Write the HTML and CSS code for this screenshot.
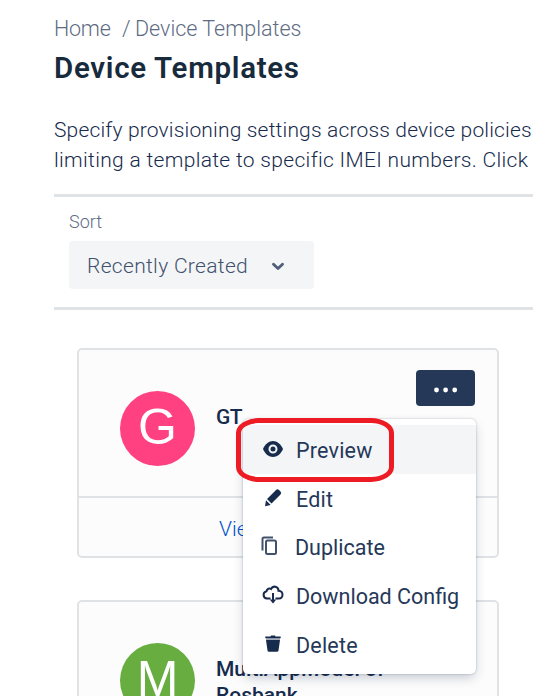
FILE: index.html
```html
<!DOCTYPE html>
<html lang="en">
<head>
<meta charset="utf-8">
<title>Device Templates</title>
<link rel="stylesheet" href="styles.css">
</head>
<body>
<main class="page">
  <nav class="breadcrumb"><span class="home">Home</span><span class="slash">/</span><span class="current">Device Templates</span></nav>
  <h1 class="title">Device Templates</h1>
  <p class="intro"><span class="line1">Specify provisioning settings across device policies</span><br><span class="line2">limiting a template to specific IMEI numbers. Click</span></p>
  <section class="filters">
    <div class="label"><span>Sort</span></div>
    <div class="select"><span class="value">Recently Created</span>
      <svg class="chevron" width="14" height="10" viewBox="0 0 14 10"><path d="M2.500 3.300 7 7.500l4.500-4.200" fill="none" stroke="#505f79" stroke-width="2.900" stroke-linecap="round" stroke-linejoin="round"/></svg>
    </div>
  </section>
  <section class="cards">
    <article class="card">
      <div class="card-body">
        <div class="avatar pink"><span>G</span></div>
        <h2 class="name gt"><span>GT</span></h2>
        <button class="more" aria-label="More"><svg width="24" height="6" viewBox="0 0 24 6" fill="#fff"><circle cx="2.500" cy="3" r="2.400"/><circle cx="11.600" cy="3" r="2.400"/><circle cx="20.700" cy="3" r="2.400"/></svg></button>
        <div class="menu">
          <div class="item active"><svg class="icon" viewBox="0 0 24 24"><path fill-rule="evenodd" d="M2 12C4 7 8 4 12 4S20 7 22 12C20 17 16 20 12 20S4 17 2 12Zm10-4.500a4.500 4.500 0 1 0 0 9 4.500 4.500 0 0 0 0-9Zm0 2a2.500 2.500 0 1 1 0 5 2.500 2.500 0 0 1 0-5Z"/></svg><span class="text preview">Preview</span></div>
          <div class="item"><svg class="icon" viewBox="0 0 24 24"><path d="m6 13 9-9q1.500-1.500 3 0l1.500 1.500q1.500 1.500 0 3l-9 9ZM5 14.300l4.700 4.700L4 20.300Z"/></svg><span class="text edit">Edit</span></div>
          <div class="item"><svg class="icon copy" viewBox="0 0 24 24"><g fill="none" stroke="#42526e" stroke-width="2"><rect x="8" y="6.500" width="10" height="13.500" rx="1.500"/><path d="M4.500 16.500V5q0-1.500 1.500-1.500h9"/></g></svg><span class="text duplicate">Duplicate</span></div>
          <div class="item"><svg class="icon" viewBox="0 0 24 24"><g fill="none" stroke="#172b4d" stroke-width="2"><path d="M9.500 15.500H6a3.700 3.700 0 0 1-.5-7.300C6 5.500 8.500 5 10 6c2-4 7.500-2.500 7.500 1.700 5.500.3 5 7.800.5 7.800h-3.500M12 10v8"/></g><path d="M8.700 16.500h6.600L12 20.500Z"/></svg><span class="text download">Download Config</span></div>
          <div class="item"><svg class="icon" viewBox="0 0 24 24"><path d="M4.300 4.500H9.500L10 3.500h4l.5 1h5.200v1.700H4.300Z"/><path d="M5 6.200h14v1.800H5Z" opacity=".4"/><path d="M5 8h14l-1.500 10.500q-.2 1.300-1.500 1.300H8q-1.300 0-1.500-1.300Z"/></svg><span class="text delete">Delete</span></div>
          <div class="highlight"></div>
        </div>
      </div>
      <div class="card-foot"><span>View</span></div>
    </article>
    <article class="card">
      <div class="card-body">
        <div class="avatar green"><span>M</span></div>
        <h2 class="name multi"><span>MultiAppModel of</span><br><span>Rosbank</span></h2>
      </div>
    </article>
  </section>
</main>
</body>
</html>
```
FILE: styles.css
```css
* { box-sizing: border-box; }
html, body { margin: 0; height: 696px; overflow: hidden; }
body { background: #fff; color: #172b4d; font-family: Roboto, "Liberation Sans", sans-serif; }
.page { padding: 14px 0 0 54px; width: 533px; height: 696px; overflow: hidden; }
.breadcrumb { display: flex; height: 30px; line-height: 30px; font-size: 21.500px; font-weight: 300; color: #5e6c84; white-space: pre; }
.home { width: 68px; letter-spacing: -.2px; }
.slash { width: 13px; }
.title { margin: 6px 0 0; height: 36px; line-height: 36px; font-size: 29.500px; font-weight: 600; letter-spacing: .7px; color: #172b3d; white-space: nowrap; }
.intro { margin: 29px 0 0; font-size: 21px; font-weight: 300; line-height: 30px; height: 79px; white-space: nowrap; }
.line1 { letter-spacing: .17px; }
.line2 { letter-spacing: .32px; }
.filters { height: 116px; border-top: 3px solid #dfe3e6; border-bottom: 3px solid #dfe3e6; padding: 14px 15px 0; }
.label { height: 30px; line-height: 22px; font-size: 18px; font-weight: 300; color: #5e6c84; }
.select { width: 245px; height: 48px; border-radius: 4px; background: #f4f5f7; color: #42526e; display: flex; align-items: center; padding: 1px 0 0 18px; font-size: 21px; font-weight: 300; }
.value { width: 184px; letter-spacing: .32px; white-space: nowrap; }
.cards { padding: 38px 0 0 23px; display: grid; gap: 42px; }
.card { width: 422px; height: 210px; border: 2px solid #dfe3e6; border-radius: 5px; background: #fcfcfc; }
.card-body { position: relative; height: 148px; border-bottom: 2px solid #dfe3e6; padding: 41px 0 0 41px; display: flex; }
.avatar { width: 75px; height: 75px; border-radius: 50%; color: #fff; font: 50px/73px "Liberation Sans", sans-serif; text-align: center; }
.pink { background: #ff4081; }
.green { background: #67ad40; }
.name { margin: 13px 0 0 21px; font-size: 21px; line-height: 26px; font-weight: 500; white-space: nowrap; }
.gt { letter-spacing: -.5px; }
.more { position: absolute; left: 337px; top: 20px; width: 59px; height: 36px; padding: 3px 0 0; border: 0; border-radius: 4px; background: #253858; display: flex; align-items: center; justify-content: center; }
.menu { position: absolute; z-index: 2; left: 164px; top: 69px; width: 233px; height: 255px; padding-top: 6px; border-radius: 5px; background: #fff; box-shadow: 0 5px 12px -2px rgba(9,30,66,.25), 0 0 2px rgba(9,30,66,.31); }
.item { height: 48.600px; display: flex; align-items: center; padding-left: 18px; font-size: 21.500px; color: #253858; white-space: nowrap; }
.text { padding-top: 3px; }
.preview, .edit, .delete { letter-spacing: .2px; }
.active { background: #f4f5f7; }
.icon { width: 24px; height: 24px; margin-right: 11px; fill: #172b4d; flex: none; }
.copy { margin-left: -3px; margin-right: 13px; }
.highlight { position: absolute; left: -7px; top: -1px; width: 158px; height: 64px; border: 5px solid #ed1c24; border-radius: 23px / 15px; }
.card-foot { padding: 17px 0 0 140px; font-size: 21px; line-height: 28px; font-weight: 300; color: #0052cc; }
```
